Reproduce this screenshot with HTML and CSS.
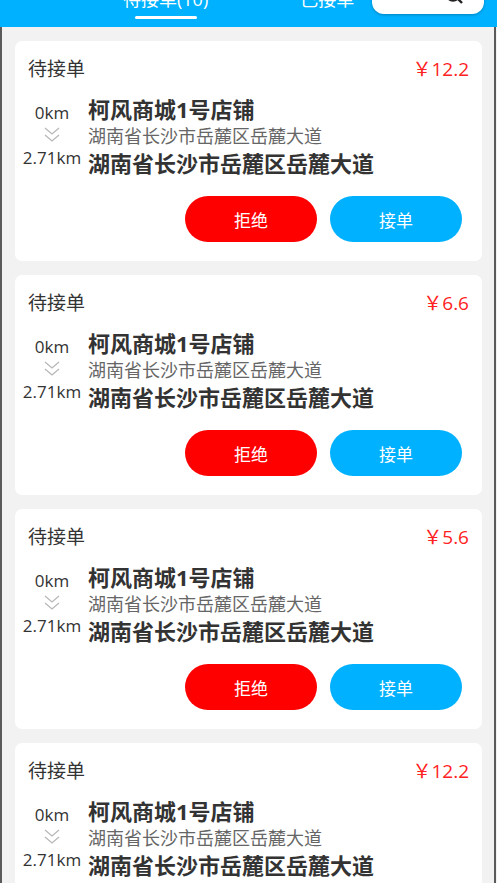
FILE: index.html
```html
<!DOCTYPE html>
<html lang="zh-CN">
<head>
    <meta charset="UTF-8">
    <meta name="viewport" content="width=device-width, initial-scale=1.0">
    <title>订单列表</title>
    <link rel="stylesheet" href="styles.css">
</head>
<body>
    <div class="top-bar">
        <div class="top-inner">
            <div class="tab tab-active">待接单(10)</div>
            <div class="tab">已接单</div>
            <div class="search-box">
                <svg class="search-icon" width="20" height="20" viewBox="0 0 20 20"><circle cx="9" cy="9" r="6.5" fill="none" stroke="#222" stroke-width="2.4"/><line x1="14" y1="14" x2="18" y2="18" stroke="#222" stroke-width="2.4"/></svg>
            </div>
        </div>
    </div>

    <div class="order-list" id="orderList"></div>

    <script>
        const orders = [
            { price: '12.2' },
            { price: '6.6' },
            { price: '5.6' },
            { price: '12.2' }
        ];

        const orderList = document.getElementById('orderList');
        orders.forEach(order => {
            const card = document.createElement('div');
            card.classList.add('order-card');
            card.innerHTML = `
                <div class="card-head">
                    <span class="state">待接单</span>
                    <span class="price">￥${order.price}</span>
                </div>
                <div class="card-body">
                    <div class="distance">
                        <span>0km</span>
                        <svg class="arrow" width="18" height="20" viewBox="0 0 18 20"><path d="M2 2 L9 8 L16 2 M2 9 L9 15 L16 9" fill="none" stroke="#b8b8b8" stroke-width="1.3"/></svg>
                        <span>2.71km</span>
                    </div>
                    <div class="address">
                        <p class="shop">柯风商城1号店铺</p>
                        <p class="from">湖南省长沙市岳麓区岳麓大道</p>
                        <p class="to">湖南省长沙市岳麓区岳麓大道</p>
                    </div>
                </div>
                <div class="card-actions">
                    <button class="btn btn-refuse">拒绝</button>
                    <button class="btn btn-accept">接单</button>
                </div>
            `;
            orderList.appendChild(card);
        });
    </script>
</body>
</html>
```

FILE: styles.css
```css
body {
    margin: 0;
    height: 883px;
    overflow: hidden;
    background-color: #f2f2f2;
    font-family: "Open Sans", "Noto Sans CJK SC", sans-serif;
    color: #333;
}
.top-bar {
    height: 27px;
    background-color: #00b1ff;
    overflow: hidden;
}
.top-inner {
    display: flex;
    align-items: flex-start;
    margin-top: -14px;
    height: 41px;
}
.tab {
    color: #fff;
    font-size: 18px;
    line-height: 26px;
    position: relative;
}
.tab-active {
    margin-left: 123px;
}
.tab-active::after {
    content: "";
    position: absolute;
    left: 12px;
    right: 11px;
    top: 30px;
    height: 3px;
    border-radius: 2px;
    background-color: #fff;
}
.tab + .tab {
    margin-left: 92px;
}
.search-box {
    margin-left: 18px;
    width: 112px;
    height: 28px;
    background-color: #fff;
    border-radius: 12px;
    box-shadow: 0 1px 3px rgba(0, 0, 0, 0.25);
    display: flex;
    justify-content: flex-end;
    align-items: center;
}
.search-icon {
    margin-right: 20px;
    margin-top: -10px;
}
.order-list {
    border-left: 2px solid #5a5a5a;
    border-right: 2px solid #5a5a5a;
    width: 496px;
    padding: 14px 0 0 13px;
    box-sizing: border-box;
    height: 856px;
}
.order-card {
    width: 467px;
    height: 220px;
    box-sizing: border-box;
    background-color: #fff;
    border-radius: 7px;
    padding: 13px 20px 20px 6px;
    margin-bottom: 14px;
}
.card-head {
    display: flex;
    justify-content: space-between;
    align-items: center;
    height: 28px;
    padding-left: 7px;
}
.state {
    font-size: 19px;
    color: #333;
}
.price {
    font-size: 19px;
    color: #ff2222;
    margin-right: -7px;
}
.card-body {
    display: flex;
    margin-top: 13px;
    height: 82px;
}
.distance {
    width: 62px;
    display: flex;
    flex-direction: column;
    align-items: center;
    padding-top: 6px;
    font-size: 17px;
    line-height: 24px;
    color: #333;
}
.arrow {
    display: block;
    margin-top: 1px;
}
.address {
    margin-left: 5px;
}
.address p {
    margin: 0;
    white-space: nowrap;
}
.shop, .to {
    font-size: 22px;
    font-weight: bold;
    line-height: 28px;
    color: #333;
}
.from {
    font-size: 18px;
    line-height: 26px;
    color: #666;
}
.card-actions {
    display: flex;
    justify-content: flex-end;
    gap: 13px;
    margin-top: 19px;
}
.btn {
    width: 132px;
    height: 46px;
    border: none;
    border-radius: 23px;
    color: #fff;
    font-family: inherit;
    font-size: 17px;
    cursor: pointer;
}
.btn-refuse {
    background-color: #ff0000;
}
.btn-accept {
    background-color: #00b1ff;
}
```
